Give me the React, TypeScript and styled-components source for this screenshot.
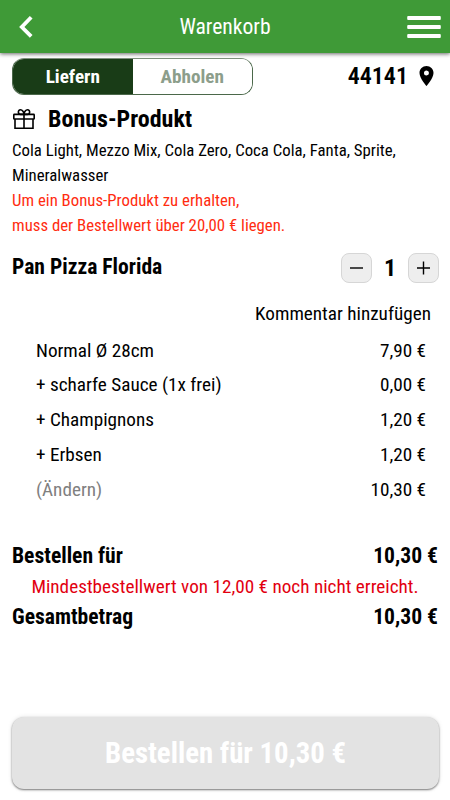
import React from "react";
import styled, { createGlobalStyle } from "styled-components";

const GlobalStyle = createGlobalStyle`
  * { box-sizing: border-box; }
  body { margin: 0; background: #fff; color: #000; font-family: "Roboto Condensed", Roboto, sans-serif; font-stretch: 75%; font-weight: 400; }
  button { font: inherit; font-stretch: inherit; color: inherit; border: 0; background: none; padding: 0; }
`;

const Page = styled.div`
  width: 450px;
  height: 800px;
  display: flex;
  flex-direction: column;
  overflow: hidden;
`;

const Header = styled.header`
  height: 53px;
  flex: none;
  display: grid;
  grid-template-columns: 60px 1fr 60px;
  align-items: center;
  background: #3f9a37;
  color: #fff;
  box-shadow: 0 1px 4px rgba(0, 0, 0, 0.6);
`;

const Title = styled.h1`
  margin: 0;
  font-size: 21.6px;
  font-weight: 400;
  line-height: 53px;
  text-align: center;
`;

const IconButton = styled.button<{ $side: "left" | "right" }>`
  display: flex;
  height: 53px;
  align-items: center;
  justify-content: ${(p) => (p.$side === "left" ? "flex-start" : "flex-end")};
  padding: ${(p) => (p.$side === "left" ? "0 0 0 18px" : "0 9px 0 0")};
`;

const ModeBar = styled.div`
  height: 46px;
  padding: 5px 16px 0 12px;
  display: flex;
  justify-content: space-between;
`;

const Segments = styled.div`
  width: 241px;
  height: 37px;
  display: flex;
  border: 1px solid #4b684a;
  border-top-color: #7d8f7c;
  border-radius: 12px;
  overflow: hidden;
`;

const Segment = styled.button<{ $active?: boolean }>`
  flex: 1;
  font-size: 19.2px;
  font-weight: 700;
  line-height: 35px;
  background: ${(p) => (p.$active ? "#193c17" : "#fff")};
  color: ${(p) => (p.$active ? "#fff" : "#8c9e8b")};
`;

const Location = styled.div`
  display: flex;
  align-items: center;
  gap: 11px;
  height: 35px;
  font-size: 24px;
  font-weight: 600;
`;

const BonusHeading = styled.h2`
  margin: 0;
  height: 39px;
  padding-left: 12px;
  display: flex;
  align-items: center;
  gap: 12px;
  font-size: 24px;
  font-weight: 700;
`;

const BonusText = styled.p<{ $warning?: boolean }>`
  margin: 0;
  padding-left: 12px;
  font-size: 16.8px;
  line-height: 25px;
  color: ${(p) => (p.$warning ? "#ff2c10" : "#000")};
`;

const ItemRow = styled.div`
  height: 32px;
  margin-top: 14px;
  padding: 0 11px 0 12px;
  display: flex;
  justify-content: space-between;
  align-items: center;
`;

const ItemName = styled.h3`
  margin: 0 0 3px;
  font-size: 21.6px;
  font-weight: 700;
`;

const Stepper = styled.div`
  display: flex;
  align-items: center;
`;

const StepButton = styled.button`
  width: 31px;
  height: 30px;
  display: flex;
  align-items: center;
  justify-content: center;
  border: 1px solid #d6d6d6;
  border-radius: 8px;
  background: #eee;
`;

const Quantity = styled.span`
  width: 36px;
  text-align: center;
  font-size: 24px;
  font-weight: 700;
`;

const Comment = styled.div`
  height: 49px;
  padding-right: 19px;
  line-height: 60px;
  font-size: 19.2px;
  text-align: right;
`;

const Details = styled.div`
  height: 174px;
  padding: 0 24px 0 36px;
  display: grid;
  grid-template-rows: 34px 35px 34px 36px 34px;
  font-size: 19.2px;
`;

const Detail = styled.div<{ $muted?: boolean }>`
  display: flex;
  justify-content: space-between;
  align-items: center;
  & > :first-child { color: ${(p) => (p.$muted ? "#808080" : "#000")}; }
`;

const Totals = styled.div`
  margin-top: 33px;
  padding: 0 12px;
`;

const TotalRow = styled.div`
  display: flex;
  justify-content: space-between;
  font-size: 21.6px;
  line-height: 31px;
  font-weight: 700;
`;

const MinimumNotice = styled.div`
  height: 30px;
  line-height: 32px;
  font-size: 19.2px;
  text-align: center;
  color: #e20010;
`;

const OrderButton = styled.button`
  margin: auto 11px 11px 12px;
  height: 72px;
  border-radius: 12px;
  background: #e3e3e3;
  color: #fff;
  font-size: 28.8px;
  font-weight: 700;
  line-height: 72px;
  box-shadow: 0 1px 2px rgba(0, 0, 0, 0.5), 0 0 5px rgba(0, 0, 0, 0.1);
`;

const details = [
  { name: "Normal Ø 28cm", price: "7,90 €" },
  { name: "+ scharfe Sauce (1x frei)", price: "0,00 €" },
  { name: "+ Champignons", price: "1,20 €" },
  { name: "+ Erbsen", price: "1,20 €" },
  { name: "(Ändern)", price: "10,30 €", muted: true },
];

export default function App() {
  return (
    <Page>
      <GlobalStyle />
      <Header>
        <IconButton $side="left" aria-label="Zurück">
          <svg width="15" height="23" viewBox="0 0 15 23" fill="none" stroke="#fff" strokeWidth="3.8">
            <path d="M13.2 2.3 3.8 12l9.4 9.4" />
          </svg>
        </IconButton>
        <Title><span>Warenkorb</span></Title>
        <IconButton $side="right" aria-label="Menü">
          <svg width="34" height="23" viewBox="0 0 34 23" fill="#fff">
            <rect x="0.2" y="1" width="33.6" height="4" rx="1" />
            <rect x="0.2" y="10" width="33.6" height="4" rx="1" />
            <rect x="0.2" y="19" width="33.6" height="4" rx="1" />
          </svg>
        </IconButton>
      </Header>
      <ModeBar>
        <Segments>
          <Segment $active><span>Liefern</span></Segment>
          <Segment><span>Abholen</span></Segment>
        </Segments>
        <Location>
          <span>44141</span>
          <svg width="15" height="20" viewBox="5 2 14 20">
            <path d="M12 2C8.13 2 5 5.13 5 9c0 5.25 7 13 7 13s7-7.75 7-13c0-3.87-3.13-7-7-7zm0 9.5A2.5 2.5 0 1 1 12 6.5a2.5 2.5 0 0 1 0 5z" />
          </svg>
        </Location>
      </ModeBar>
      <BonusHeading>
        <svg width="24" height="22" viewBox="0 0 24 22" fill="none" stroke="#000" strokeWidth="1.6">
          <rect x="1.8" y="6.4" width="20.4" height="4.6" rx="0.6" />
          <path d="M3 11v9.2h18v-9.2M12 6.4v13.8M12 6.4H8.6C5.6 6.4 5.7 1.7 8.4 1.7c2 0 3.6 2.4 3.6 4.7zM12 6.4h3.4c3 0 2.9-4.7.2-4.7-2 0-3.6 2.4-3.6 4.7z" />
        </svg>
        <span>Bonus-Produkt</span>
      </BonusHeading>
      <BonusText>
        <span>Cola Light, Mezzo Mix, Cola Zero, Coca Cola, Fanta, Sprite,</span>
        <br />
        <span>Mineralwasser</span>
      </BonusText>
      <BonusText $warning>
        <span>Um ein Bonus-Produkt zu erhalten,</span>
        <br />
        <span>muss der Bestellwert über 20,00 € liegen.</span>
      </BonusText>
      <ItemRow>
        <ItemName>Pan Pizza Florida</ItemName>
        <Stepper>
          <StepButton aria-label="Weniger">
            <svg width="13" height="14" viewBox="0 0 13 14" stroke="#000" strokeWidth="1.4"><path d="M0 7h13" /></svg>
          </StepButton>
          <Quantity>1</Quantity>
          <StepButton aria-label="Mehr">
            <svg width="13" height="14" viewBox="0 0 13 14" stroke="#000" strokeWidth="1.4"><path d="M0 7h13M6.5 .5v13" /></svg>
          </StepButton>
        </Stepper>
      </ItemRow>
      <Comment>Kommentar hinzufügen</Comment>
      <Details>
        {details.map((d) => (
          <Detail key={d.name} $muted={d.muted}>
            <span>{d.name}</span>
            <span>{d.price}</span>
          </Detail>
        ))}
      </Details>
      <Totals>
        <TotalRow><span>Bestellen für</span><span>10,30 €</span></TotalRow>
        <MinimumNotice>Mindestbestellwert von 12,00 € noch nicht erreicht.</MinimumNotice>
        <TotalRow><span>Gesamtbetrag</span><span>10,30 €</span></TotalRow>
      </Totals>
      <OrderButton>Bestellen für 10,30 €</OrderButton>
    </Page>
  );
}
